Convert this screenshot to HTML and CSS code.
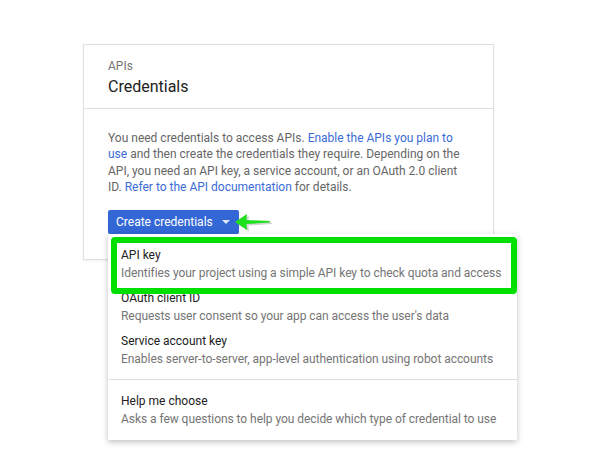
FILE: index.html
```html
<!DOCTYPE html>
<html lang="en">
<head>
    <meta charset="UTF-8">
    <title>Credentials</title>
    <link rel="stylesheet" href="styles.css">
</head>
<body>
    <div class="page">
        <div class="card">
            <div class="card-header">
                <div class="crumb">APIs</div>
                <h1>Credentials</h1>
            </div>
            <div class="card-body">
                <p>You need credentials to access APIs. <a href="#">Enable the APIs you plan to use</a> and then create the credentials they require. Depending on the API, you need an API key, a service account, or an OAuth 2.0 client ID. <a href="#">Refer to the API documentation</a> for details.</p>
                <div class="create">
                    <button class="create-btn">Create credentials <span class="caret"></span></button>
                    <svg class="pointer" width="40" height="20" viewBox="0 0 40 20">
                        <path d="M2 10.5 L14 2.5 L13.5 8.5 L37 9.5 L37 11 L13.5 12.5 L14 18.5 Z" fill="#a0a0a0" opacity="0.45" transform="translate(1 1)"/>
                        <path d="M1 10 L13 2 L12.5 8 L36 9 L36 10.5 L12.5 12 L13 18 Z" fill="#1ee01e"/>
                    </svg>

                    <!-- menu open under the button -->
                    <div class="menu">
                        <div class="highlight"></div>
                        <div class="item">
                            <div class="item-title">API key</div>
                            <div class="item-desc">Identifies your project using a simple API key to check quota and access</div>
                        </div>
                        <div class="item">
                            <div class="item-title">OAuth client ID</div>
                            <div class="item-desc">Requests user consent so your app can access the user's data</div>
                        </div>
                        <div class="item">
                            <div class="item-title">Service account key</div>
                            <div class="item-desc">Enables server-to-server, app-level authentication using robot accounts</div>
                        </div>
                        <div class="menu-sep"></div>
                        <div class="item">
                            <div class="item-title">Help me choose</div>
                            <div class="item-desc">Asks a few questions to help you decide which type of credential to use</div>
                        </div>
                    </div>
                </div>
            </div>
        </div>
    </div>
</body>
</html>
```

FILE: styles.css
```css
html, body {
    min-height: 474px;
}

body {
    margin: 0;
    background-color: #fff;
    font-family: 'Roboto', 'Liberation Sans', sans-serif;
    color: #212121;
}

.page {
    min-height: 430px;
    padding: 44px 0 0 83px;
}

.card {
    width: 409px;
    border: 1px solid #e0e0e0;
    box-shadow: 0 1px 2px rgba(0,0,0,0.06);
    background-color: #fff;
}

.card-header {
    height: 64px;
    padding: 0 24px;
    border-bottom: 1px solid #e0e0e0;
    box-sizing: border-box;
    padding-top: 14px;
}

.crumb {
    font-size: 12px;
    line-height: 14px;
    color: #757575;
}

h1 {
    margin: 4px 0 0;
    font-size: 16px;
    font-weight: 400;
    line-height: 20px;
    color: #212121;
}

.card-body {
    padding: 21px 24px 25px;
}

.card-body p {
    margin: 0 0 14px;
    font-size: 12px;
    line-height: 16.4px;
    color: #666;
}

.card-body a {
    color: #3b6bd6;
    text-decoration: none;
}

.create {
    position: relative;
    display: flex;
    align-items: center;
}

.create-btn {
    height: 24px;
    padding: 0 8px;
    border: none;
    border-radius: 2px;
    background-color: #3367d6;
    color: #fff;
    font-family: inherit;
    font-size: 12px;
    display: flex;
    align-items: center;
    gap: 7px;
    box-shadow: 0 1px 1px rgba(0,0,0,0.15);
}

.caret {
    width: 0;
    height: 0;
    border-left: 4px solid transparent;
    border-right: 4px solid transparent;
    border-top: 4px solid #dfe7f8;
    margin-left: 2px;
    margin-right: 1px;
}

.pointer {
    margin-left: -5px;
    margin-top: 1px;
}

.menu {
    position: absolute;
    left: 0;
    top: 24px;
    width: 409px;
    padding: 8px 0 9px;
    background-color: #fff;
    box-shadow: 0 2px 6px rgba(0,0,0,0.25);
    z-index: 2;
}

.highlight {
    position: absolute;
    left: 3px;
    top: 3px;
    width: 406px;
    height: 57px;
    box-sizing: border-box;
    border: 6px solid #00e000;
    border-radius: 4px;
}

.item {
    padding: 4px 13px 3px;
}

.item-title {
    font-size: 12px;
    line-height: 18px;
    color: #212121;
}

.item-desc {
    font-size: 12px;
    line-height: 18px;
    color: #757575;
    white-space: nowrap;
    letter-spacing: -0.05px;
}

.menu-sep {
    height: 1px;
    margin: 8px 0;
    background-color: #e0e0e0;
}
```
